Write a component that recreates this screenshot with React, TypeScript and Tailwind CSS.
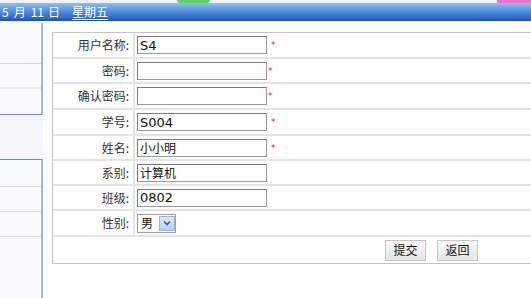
import React from "react";

const cjk = { fontFamily: '"Noto Sans CJK SC", "Noto Sans", sans-serif' };
const latin = { fontFamily: '"DejaVu Sans", "Noto Sans CJK SC", sans-serif' };

function Star({ tight }: { tight?: boolean }) {
  return (
    <span
      className={`self-start mt-[8px] text-[9px] leading-none text-[#ff2020] ${tight ? "ml-[1px]" : "ml-[4px]"}`}
      style={latin}
    >
      *
    </span>
  );
}

function TextBox({ value, cn }: { value: string; cn?: boolean }) {
  return (
    <div
      className={`w-[130px] h-[18px] border border-[#9a9a9a] border-t-[#7c7c7c] border-l-[#7c7c7c] bg-white flex items-center pl-[2px] leading-none text-[#111] ${cn ? "text-[12px]" : "text-[13px]"}`}
      style={cn ? cjk : latin}
    >
      {value}
    </div>
  );
}

type Row = { label: string; value?: string; star?: "n" | "t"; h: string; select?: boolean; cn?: boolean };

const rows: Row[] = [
  { label: "用户名称", value: "S4", star: "n", h: "h-[26px]" },
  { label: "密码", value: "", star: "t", h: "h-[25px]" },
  { label: "确认密码", value: "", star: "t", h: "h-[26px]" },
  { label: "学号", value: "S004", star: "n", h: "h-[26px]" },
  { label: "姓名", value: "小小明", star: "n", h: "h-[25px]", cn: true },
  { label: "系别", value: "计算机", h: "h-[25px]", cn: true },
  { label: "班级", value: "0802", h: "h-[25px]" },
  { label: "性别", select: true, h: "h-[26px]" },
];

export default function App() {
  return (
    <div className="w-[531px] h-[298px] overflow-hidden bg-white flex flex-col">
      {/* top strip */}
      <div className="h-[3px] flex bg-[#eef2f6] shrink-0">
        <div className="w-[177px]" />
        <div className="w-[33px] bg-[#62cc6e] rounded-b-[10px]" />
        <div className="flex-1" />
        <div className="w-[34px] bg-[#de78cf]" />
      </div>
      {/* header bar */}
      <div
        className="h-[18px] shrink-0 bg-gradient-to-b from-[#8cc0f0] via-[#4f8fdc] to-[#2a5ab4] flex items-center pl-[2px] text-white text-[12px] leading-none border-b border-[#2550a0]"
        style={cjk}
      >
        <span>5</span>
        <span className="ml-[5px]">月</span>
        <span className="ml-[5px]">11</span>
        <span className="ml-[4px]">日</span>
        <span className="ml-[12px] underline underline-offset-2 decoration-1">星期五</span>
      </div>
      <div className="flex flex-1 min-h-0">
        {/* sidebar */}
        <div className="w-[43px] shrink-0 flex flex-col bg-[#f3f7fc]">
          <div className="h-[2px]" />
          <div className="border-r-2 border-[#a3badd] border-b border-b-[#6f8fc4] bg-[#f8fafd] flex flex-col">
            <div className="h-[41px] border-b border-[#d6d6d6]" />
            <div className="h-[25px] border-b-2 border-[#e6e6e6]" />
            <div className="h-[25px]" />
          </div>
          <div className="h-[44px]" />
          <div className="flex-1 border-t border-[#6f8fc4] border-r-2 border-r-[#a3badd] bg-[#f8fafd] flex flex-col">
            <div className="h-[27px] border-b border-[#dcdcdc]" />
            <div className="h-[25px] border-b border-[#dcdcdc]" />
            <div className="h-[25px] border-b border-[#dcdcdc]" />
          </div>
        </div>
        {/* main */}
        <div className="flex-1 pl-[9px] pt-[11px]">
          <div className="w-[560px] border border-[#c4c4c4] bg-white text-[12px] text-[#333]" style={cjk}>
            {rows.map((r) => (
              <div key={r.label} className={`flex ${r.h} border-b-2 border-[#e4e4e4]`}>
                <div className="w-[82px] border-r-2 border-[#e4e4e4] flex items-center justify-end pr-[4px] leading-none">
                  {r.label}:
                </div>
                <div className="flex-1 flex items-center pl-[2px]">
                  {r.select ? (
                    <div className="h-[19px] w-[39px] border border-[#a0a0a0] bg-white flex items-center text-[#111]">
                      <span className="pl-[3px] w-[21px] leading-none">男</span>
                      <div className="w-[16px] h-[15px] bg-gradient-to-b from-[#dbe7f7] to-[#b9cff0] border border-[#9ab4dc] flex items-center justify-center">
                        <svg width="8" height="6" viewBox="0 0 8 6">
                          <path d="M1 1.5 L4 4.5 L7 1.5" stroke="#3a5a96" strokeWidth="1.6" fill="none" />
                        </svg>
                      </div>
                    </div>
                  ) : (
                    <>
                      <TextBox value={r.value || ""} cn={r.cn} />
                      {r.star && <Star tight={r.star === "t"} />}
                    </>
                  )}
                </div>
              </div>
            ))}
            <div className="h-[26px] flex items-center pl-[332px] gap-[11px]">
              <button className="w-[41px] h-[21px] border border-[#c6c6c6] bg-gradient-to-b from-[#fafafa] to-[#e4e4e4] text-[12px] leading-none text-[#111]">
                提交
              </button>
              <button className="w-[41px] h-[21px] border border-[#c6c6c6] bg-gradient-to-b from-[#fafafa] to-[#e4e4e4] text-[12px] leading-none text-[#111]">
                返回
              </button>
            </div>
          </div>
        </div>
      </div>
    </div>
  );
}
